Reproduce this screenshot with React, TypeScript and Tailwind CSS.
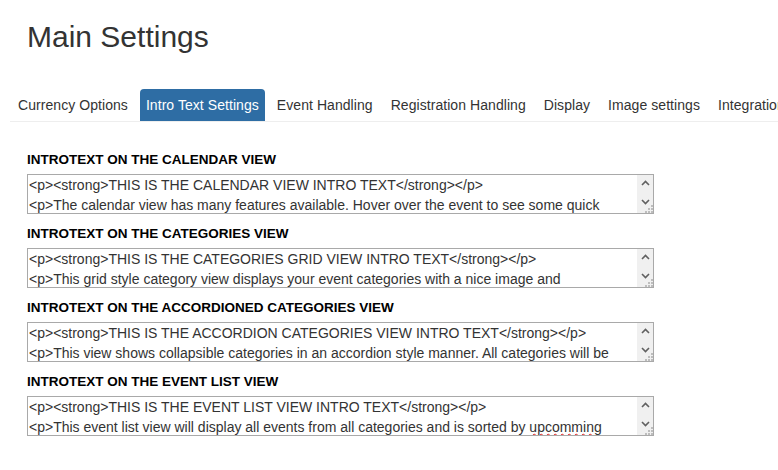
const tabs = [
    "Currency Options",
    "Intro Text Settings",
    "Event Handling",
    "Registration Handling",
    "Display",
    "Image settings",
    "Integration",
];

type Section = {
    title: string;
    first: string;
    second: string;
    misspelled?: string;
};

const sections: Section[] = [
    {
        title: "INTROTEXT ON THE CALENDAR VIEW",
        first: "<p><strong>THIS IS THE CALENDAR VIEW INTRO TEXT</strong></p>",
        second: "<p>The calendar view has many features available. Hover over the event to see some quick",
    },
    {
        title: "INTROTEXT ON THE CATEGORIES VIEW",
        first: "<p><strong>THIS IS THE CATEGORIES GRID VIEW INTRO TEXT</strong></p>",
        second: "<p>This grid style category view displays your event categories with a nice image and",
    },
    {
        title: "INTROTEXT ON THE ACCORDIONED CATEGORIES VIEW",
        first: "<p><strong>THIS IS THE ACCORDION CATEGORIES VIEW INTRO TEXT</strong></p>",
        second: "<p>This view shows collapsible categories in an accordion style manner. All categories will be",
    },
    {
        title: "INTROTEXT ON THE EVENT LIST VIEW",
        first: "<p><strong>THIS IS THE EVENT LIST VIEW INTRO TEXT</strong></p>",
        second: "<p>This event list view will display all events from all categories and is sorted by ",
        misspelled: "upcomming",
    },
];

const Scrollbar = () => {
    return (
        <div className="relative w-[16px] shrink-0 bg-[#f0f0f0] flex flex-col items-center justify-between pt-[5px] pb-[8px]">
            <svg width="9" height="6" viewBox="0 0 9 6">
                <polyline points="1,5 4.5,1.5 8,5" fill="none" stroke="#606060" strokeWidth="1.6" />
            </svg>
            <svg width="9" height="6" viewBox="0 0 9 6">
                <polyline points="1,1 4.5,4.5 8,1" fill="none" stroke="#606060" strokeWidth="1.6" />
            </svg>
            {/* resize grip */}
            <svg className="absolute right-0 bottom-0" width="9" height="9" viewBox="0 0 9 9">
                <rect x="7" y="1" width="2" height="2" fill="#bdbdbd" />
                <rect x="4" y="4" width="2" height="2" fill="#bdbdbd" />
                <rect x="7" y="4" width="2" height="2" fill="#bdbdbd" />
                <rect x="1" y="7" width="2" height="2" fill="#bdbdbd" />
                <rect x="4" y="7" width="2" height="2" fill="#bdbdbd" />
                <rect x="7" y="7" width="2" height="2" fill="#bdbdbd" />
            </svg>
        </div>
    );
};

const IntroField = ({ section }: { section: Section }) => {
    return (
        <div className="flex flex-col">
            <h3 className="text-[13.5px] leading-[16px] font-bold text-black">{section.title}</h3>
            <div className="mt-[6px] w-[627px] h-[40px] border border-[#a9a9a9] bg-white flex">
                <div className="flex-1 overflow-hidden pl-[1px] text-[14px] leading-[20px] text-[#333] whitespace-nowrap">
                    <div>{section.first}</div>
                    <div>
                        {section.second}
                        {section.misspelled && (
                            <span className="underline decoration-wavy decoration-[#e02020] decoration-1 underline-offset-[1px]">
                                {section.misspelled}
                            </span>
                        )}
                    </div>
                </div>
                <Scrollbar />
            </div>
        </div>
    );
};

export default function App() {
    return (
        <div className="w-[778px] h-[470px] overflow-hidden bg-white font-['Liberation_Sans',Arial,sans-serif] text-[#333]">
            <h1 className="pl-[27px] pt-[20px] text-[30px] leading-[33px] text-[#333]">Main Settings</h1>

            <div className="mt-[36px] ml-[10px] pl-[2px] flex gap-[6px] h-[33px] border-b border-[#eeeeee] whitespace-nowrap overflow-hidden">
                {tabs.map((tab) => (
                    <div
                        key={tab}
                        className={
                            tab === "Intro Text Settings"
                                ? "h-[32px] px-[6px] pt-[1px] flex items-center text-[14px] tracking-[0.06px] rounded-t-[4px] bg-[#2e6da4] text-white"
                                : "h-[32px] px-[6px] pt-[1px] flex items-center text-[14px] tracking-[0.06px] text-[#333]"
                        }
                    >
                        {tab}
                    </div>
                ))}
            </div>

            <div className="mt-[30px] pl-[27px] flex flex-col gap-[12px]">
                {sections.map((section) => (
                    <IntroField key={section.title} section={section} />
                ))}
            </div>
        </div>
    );
}
